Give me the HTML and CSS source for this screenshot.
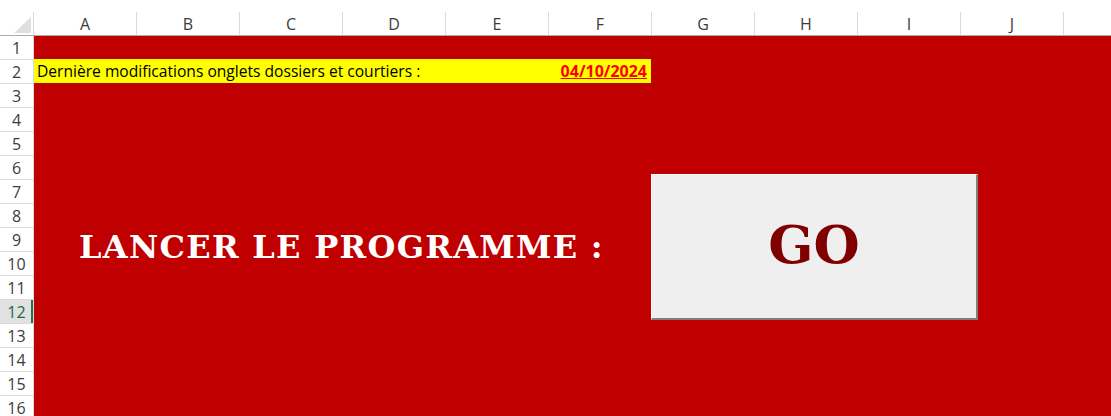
FILE: index.html
```html
<!DOCTYPE html>
<html lang="fr">
<head>
<meta charset="utf-8">
<title>Feuille</title>
<link rel="stylesheet" href="styles.css">
</head>
<body>
<div class="topband"></div>
<div class="colheads">
  <div class="corner"><span class="tri"></span></div>
  <div class="ch">A</div><div class="ch">B</div><div class="ch">C</div><div class="ch">D</div><div class="ch">E</div>
  <div class="ch">F</div><div class="ch">G</div><div class="ch">H</div><div class="ch">I</div><div class="ch">J</div>
  <div class="ch last"></div>
</div>
<div class="body">
  <div class="rowheads">
    <div class="rh">1</div><div class="rh">2</div><div class="rh">3</div><div class="rh">4</div>
    <div class="rh">5</div><div class="rh">6</div><div class="rh">7</div><div class="rh">8</div>
    <div class="rh">9</div><div class="rh">10</div><div class="rh">11</div><div class="rh sel">12</div>
    <div class="rh">13</div><div class="rh">14</div><div class="rh">15</div><div class="rh">16</div>
  </div>
  <div class="sheet">
    <div class="notice">
      <span class="notice-label">Dernière modifications onglets dossiers et courtiers :</span>
      <span class="notice-date">04/10/2024</span>
    </div>
    <div class="launch">
      <div class="launch-label">LANCER LE PROGRAMME :</div>
      <button class="go">GO</button>
    </div>
  </div>
</div>
</body>
</html>
```

FILE: styles.css
```css
html, body {
  margin: 0;
  padding: 0;
  background: #ffffff;
  overflow: hidden;
}
body {
  width: 1111px;
  height: 416px;
  font-family: "Open Sans", "Noto Sans", sans-serif;
}
.topband {
  height: 12px;
}
.colheads {
  display: grid;
  grid-template-columns: 34px repeat(10, 103px) 1fr;
  height: 23px;
  border-bottom: 1px solid #ababab;
}
.corner {
  position: relative;
  border-right: 1px solid #dadada;
}
.tri {
  position: absolute;
  right: 2px;
  bottom: 2px;
  width: 0;
  height: 0;
  border-left: 17px solid transparent;
  border-bottom: 16px solid #dfdfdf;
}
.ch {
  display: flex;
  align-items: center;
  justify-content: center;
  border-right: 1px solid #dadada;
  color: #3c3c3c;
  font-size: 16px;
  line-height: 1;
}
.ch.last {
  border-right: none;
}
.body {
  display: flex;
  height: 380px;
}
.rowheads {
  width: 33px;
  flex: none;
  border-right: 1px solid #dadada;
  display: flex;
  flex-direction: column;
}
.rh {
  height: 23px;
  flex: none;
  border-bottom: 1px solid #dadada;
  display: flex;
  align-items: center;
  justify-content: center;
  color: #3c3c3c;
  font-size: 16px;
  line-height: 1;
}
.rh.sel {
  background: #e1e1e1;
  color: #1e6b41;
  box-shadow: inset -2px 0 0 #217346;
}
.sheet {
  flex: 1;
  background: #c00000;
  display: flex;
  flex-direction: column;
}
.notice {
  margin-top: 23px;
  width: 617px;
  height: 24px;
  box-sizing: border-box;
  background: #ffff00;
  display: flex;
  align-items: center;
  justify-content: space-between;
  padding: 0 4px 0 3px;
  font-size: 15.6px;
}
.notice-label {
  color: #000000;
}
.notice-date {
  color: #ff0000;
  font-weight: 700;
  text-decoration: underline;
  font-size: 16px;
}
.launch {
  margin-top: 91px;
  display: grid;
  grid-template-columns: 617px 327px;
  align-items: center;
}
.launch-label {
  padding-left: 45px;
  color: #ffffff;
  font-family: "DejaVu Serif", serif;
  font-weight: 700;
  font-size: 32px;
  letter-spacing: 1.3px;
  white-space: nowrap;
}
.go {
  width: 327px;
  height: 146px;
  margin: 0;
  padding: 0;
  background: #efefef;
  border-style: solid;
  border-width: 1px 2px 2px 1px;
  border-color: #ffffff #808080 #808080 #ffffff;
  color: #800000;
  font-family: "DejaVu Serif", serif;
  font-weight: 700;
  font-size: 53px;
  line-height: 1;
  padding-bottom: 4px;
}
```
